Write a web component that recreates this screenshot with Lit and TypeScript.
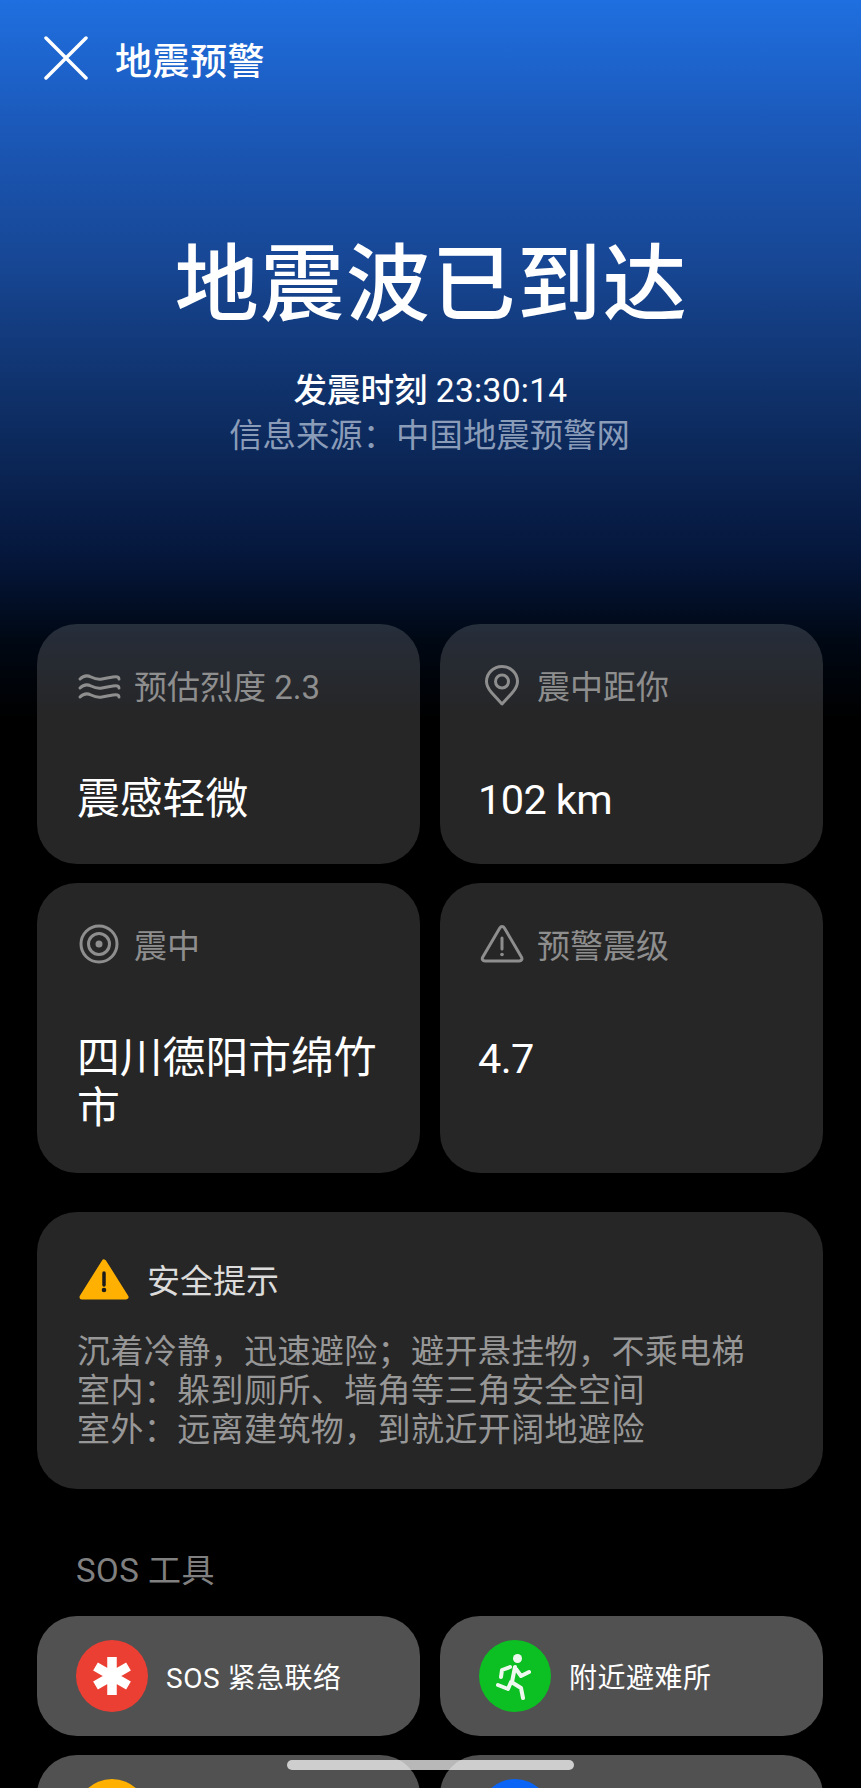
import { LitElement, html, css, svg } from "lit";
import { customElement } from "lit/decorators.js";

const waves = svg`<path d="M3 15Q8 10 14 13T25 15 36 13 42 15M3 24Q8 19 14 22T25 24 36 22 42 24M3 33Q8 28 14 31T25 33 36 31 42 33"/>`;
const pin = svg`<path d="M22 40 11.500 28.500C8 24.500 6.500 21.500 6.500 17.500 6.500 9 13.500 2.500 22 2.500S37.500 9 37.500 17.500c0 4-1.500 7-5 11z"/><circle cx="22" cy="17.500" r="6.500"/>`;
const target = svg`<circle cx="22" cy="21" r="18"/><circle cx="22" cy="21" r="10.500"/><circle cx="22" cy="21" r="3.500" class="solid"/>`;
const warn = svg`<path d="M22 3.500c1 0 1.800.5 2.400 1.500l17 29c1.200 2 .2 4-2.200 4H5c-2.400 0-3.400-2-2.200-4l17-29c.6-1 1.400-1.500 2.200-1.500z"/><path d="M22 15v11"/><circle cx="22" cy="31.500" r="1.800" class="solid"/>`;

const cards = [
  { icon: waves, label: "预估烈度 2.3", value: "震感轻微", num: false },
  { icon: pin, label: "震中距你", value: "102 km", num: true },
  { icon: target, label: "震中", value: "四川德阳市绵竹市", num: false },
  { icon: warn, label: "预警震级", value: "4.7", num: true },
];

@customElement("app-root")
export class AppRoot extends LitElement {
  static styles = css`
    :host {
      display: block;
      position: relative;
      width: 861px;
      height: 1788px;
      overflow: hidden;
      color: #fff;
      font-family: Roboto, "Noto Sans CJK SC", sans-serif;
      background: linear-gradient(180deg, #1f6fe0 0, #1b58b8 130px, #174795 260px, #0f3068 400px, #05163a 560px, #000814 640px, #000 720px);
    }
    .top {
      display: flex;
      align-items: center;
      gap: 27px;
      height: 58px;
      padding: 29px 0 0 44px;
    }
    .close {
      width: 44px;
      height: 44px;
      fill: none;
      stroke: #fff;
      stroke-width: 3.500;
      stroke-linecap: round;
    }
    .top h1 {
      margin: 9px 0 0;
      font-size: 37px;
      font-weight: 500;
      line-height: 58px;
      letter-spacing: 0.5px;
    }
    .hero {
      text-align: center;
      padding-top: 149px;
    }
    .hero h2 {
      margin: 0 -2px 0 0;
      font-size: 84px;
      line-height: 100px;
      font-weight: 500;
      letter-spacing: 1.600px;
    }
    .time {
      margin-top: 32px;
      font-size: 33.500px;
      line-height: 45px;
      font-weight: 500;
    }
    .clock {
      font-weight: 400;
      letter-spacing: 0.3px;
    }
    .source {
      padding-right: 2px;
      font-size: 33.400px;
      line-height: 45px;
      color: #8a9cb8;
    }
    .grid {
      display: grid;
      grid-template-columns: 383px 383px;
      gap: 19px 20px;
      margin: 0 0 0 37px;
    }
    .info {
      margin-top: 166px;
    }
    .card {
      padding: 40px;
      border-radius: 40px;
      background: rgba(255, 255, 255, 0.15);
    }
    .label {
      display: flex;
      align-items: center;
      gap: 13px;
      height: 42px;
      font-size: 33px;
      color: #8e8e8e;
    }
    .label svg {
      flex: none;
      width: 44px;
      height: 42px;
      fill: none;
      stroke: #8e8e8e;
      stroke-width: 3;
      stroke-linejoin: round;
      stroke-linecap: round;
    }
    .label svg .solid {
      fill: #8e8e8e;
      stroke: none;
    }
    .value {
      margin-top: 68px;
      font-size: 42.800px;
      line-height: 50px;
    }
    .value.num {
      margin: 70px 0 0 -2px;
      font-size: 41.500px;
      line-height: 48px;
      letter-spacing: -0.6px;
    }
    .safety {
      margin: 39px 38px 0 37px;
      padding: 40px;
      border-radius: 40px;
      background: rgba(255, 255, 255, 0.15);
    }
    .safety-head {
      display: flex;
      align-items: center;
      gap: 16px;
      height: 60px;
      font-size: 33px;
      color: #dcdcdc;
    }
    .safety-head span {
      margin-bottom: 6px;
    }
    .safety-head svg {
      width: 54px;
      height: 46px;
      flex: none;
    }
    .safety p {
      margin: 20px 0 0;
      font-size: 33px;
      line-height: 39px;
      letter-spacing: 0.4px;
      color: #979797;
      white-space: nowrap;
    }
    .section {
      margin: 62px 0 25px 76px;
      font-size: 33px;
      line-height: 40px;
      letter-spacing: 0.5px;
      color: #808080;
    }
    .tool {
      display: flex;
      align-items: center;
      gap: 18px;
      height: 72px;
      padding: 24px 39px;
      border-radius: 40px;
      background: #515151;
      font-size: 28px;
      letter-spacing: 0.5px;
    }
    .dot {
      flex: none;
      width: 72px;
      height: 72px;
      border-radius: 50%;
    }
    .dot svg {
      display: block;
      width: 72px;
      height: 72px;
    }
    .red { background: #ec3f34; }
    .green { background: #0cbf22; }
    .yellow { background: #ffb000; }
    .blue { background: #0a64f5; }
    .runner {
      fill: none;
      stroke: #eef8ee;
      stroke-width: 4;
      stroke-linecap: round;
      stroke-linejoin: round;
    }
    .handle {
      position: absolute;
      left: 287px;
      top: 1760px;
      width: 287px;
      height: 10px;
      border-radius: 5px;
      background: rgba(255, 255, 255, 0.72);
    }
  `;

  render() {
    return html`
      <div class="top">
        <svg class="close" viewBox="0 0 44 44"><path d="M2 2l40 40M42 2 2 42"/></svg>
        <h1>地震预警</h1>
      </div>
      <div class="hero">
        <h2>地震波已到达</h2>
        <div class="time">发震时刻 <span class="clock">23:30:14</span></div>
        <div class="source">信息来源：中国地震预警网</div>
      </div>
      <div class="grid info">
        ${cards.map(
          (c) => html`<div class="card">
            <div class="label"><svg viewBox="0 0 44 42">${c.icon}</svg>${c.label}</div>
            <div class="value ${c.num ? "num" : ""}">${c.value}</div>
          </div>`
        )}
      </div>
      <div class="safety">
        <div class="safety-head">
          <svg viewBox="0 0 54 46">
            <path d="M27 3 49 38H5z" fill="#ffb000" stroke="#ffb000" stroke-width="5" stroke-linejoin="round"/>
            <path d="M27 14v12" stroke="#1c1c1c" stroke-width="3.500" stroke-linecap="round"/>
            <circle cx="27" cy="31" r="2.300" fill="#1c1c1c"/>
          </svg>
          <span>安全提示</span>
        </div>
        <p>沉着冷静，迅速避险；避开悬挂物，不乘电梯<br>室内：躲到厕所、墙角等三角安全空间<br>室外：远离建筑物，到就近开阔地避险</p>
      </div>
      <div class="section">SOS 工具</div>
      <div class="grid tools">
        <div class="tool">
          <div class="dot red">
            <svg viewBox="0 0 72 72" stroke="#fff" stroke-width="9.500">
              <path d="M36 17v38M19.500 26.500l33 19M52.500 26.500l-33 19"/>
            </svg>
          </div>
          SOS 紧急联络
        </div>
        <div class="tool">
          <div class="dot green">
            <svg viewBox="0 0 72 72">
              <circle cx="38.500" cy="18.500" r="4.500" fill="#eef8ee"/>
              <path class="runner" d="M36 27 33 42M31 27l-8 3-1 7M37 29l5 7 8-4M34 43l8 5 2 10M32 42l-3 7-10-4"/>
            </svg>
          </div>
          附近避难所
        </div>
        <div class="tool"><div class="dot yellow"></div></div>
        <div class="tool"><div class="dot blue"></div></div>
      </div>
      <div class="handle"></div>
    `;
  }
}
